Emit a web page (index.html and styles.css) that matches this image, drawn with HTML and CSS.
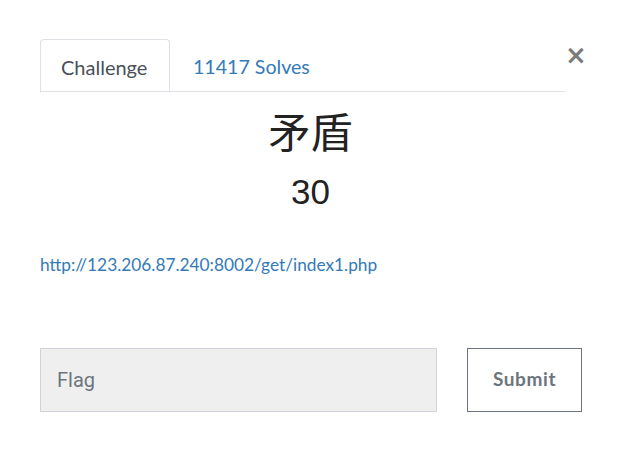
FILE: index.html
```html
<!DOCTYPE html>
<html>
<head>
<meta charset="utf-8">
<link rel="stylesheet" href="styles.css">
</head>
<body>
<div class="modal">
  <div class="head">
    <ul class="tabs">
      <li class="tab active">Challenge</li>
      <li class="tab link">11417 Solves</li>
    </ul>
    <span class="close">×</span>
  </div>
  <h1 class="title">矛盾</h1>
  <h2 class="value">30</h2>
  <p class="desc"><a href="#">http://123.206.87.240:8002/get/index1.php</a></p>
  <div class="form">
    <input class="flag" type="text" placeholder="Flag">
    <button class="submit">Submit</button>
  </div>
</div>
</body>
</html>
```
FILE: styles.css
```css
html, body { margin: 0; padding: 0; background: #fff; }
body { font-family: Lato, "Noto Sans", sans-serif; color: #212529; }
.modal { width: 617px; height: 469px; box-sizing: border-box; padding: 39px 36px 0 40px; }
.head { display: flex; align-items: flex-start; }
.tabs { list-style: none; margin: 0; padding: 0; display: flex; flex: 0 0 525px; border-bottom: 1px solid #dee2e6; height: 53px; box-sizing: border-box; }
.tab { font-size: 20px; padding: 0 21px; height: 53px; line-height: 55px; box-sizing: border-box; }
.tab.active { color: #495057; border: 1px solid #dee2e6; border-bottom-color: #fff; border-radius: 4px 4px 0 0; height: 54px; width: 130px; padding: 0 0 0 20px; }
.tab.link { color: #337ab7; padding-left: 23px; font-size: 19.6px; }
.close { margin-left: auto; font-family: "DejaVu Sans", sans-serif; font-size: 26px; font-weight: bold; color: #7a7a7a; line-height: 30px; margin-top: 1px; margin-right: 0; width: 22px; }
.title { font-family: "Liberation Sans", "Noto Sans CJK SC", sans-serif; font-weight: 400; font-size: 42px; text-align: center; margin: 18px 0 0; line-height: 48px; color: #222; width: 541px; }
.value { font-family: "Liberation Sans", sans-serif; font-weight: 400; font-size: 35px; text-align: center; margin: 14px 0 0; line-height: 40px; color: #222; width: 541px; }
.desc { margin: 41px 0 0; font-size: 17.3px; line-height: 24px; }
.desc a { color: #337ab7; text-decoration: none; }
.form { display: flex; margin-top: 71px; width: 542px; justify-content: space-between; }
.flag { width: 397px; height: 64px; box-sizing: border-box; background: #efefef; border: 1px solid #ced4da; padding: 0 16px; font-family: Roboto, sans-serif; font-size: 20px; color: #495057; outline: none; }
.flag::placeholder { color: #6c757d; }
.submit { width: 115px; height: 64px; box-sizing: border-box; background: #fff; border: 1px solid #6c757d; padding: 0 0 4px; font-family: Lato, sans-serif; font-weight: 700; font-size: 19px; color: #6c757d; letter-spacing: 0.6px; }
```
